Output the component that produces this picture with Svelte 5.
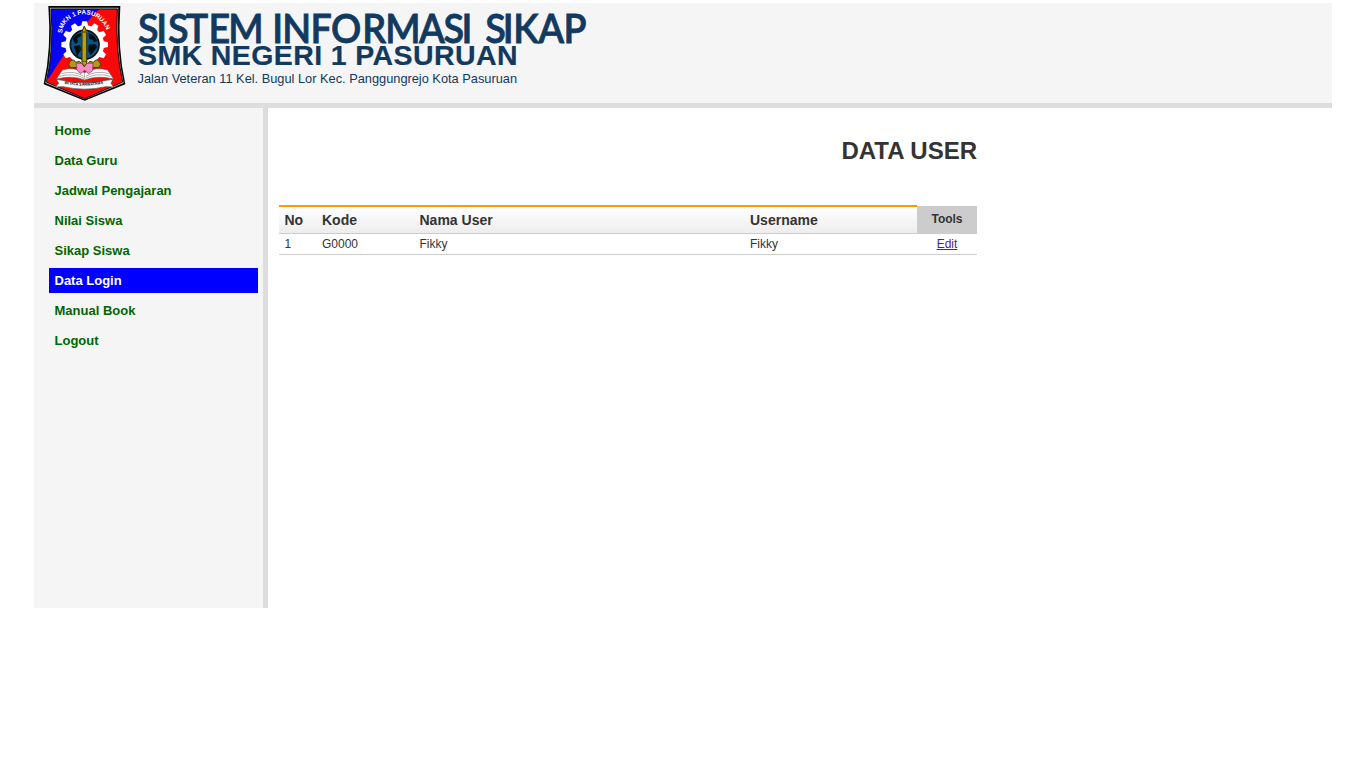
<script>
  const menu = ['Home', 'Data Guru', 'Jadwal Pengajaran', 'Nilai Siswa', 'Sikap Siswa', 'Data Login', 'Manual Book', 'Logout'];
  const active = 'Data Login';
  const users = [{ kode: 'G0000', nama: 'Fikky', username: 'Fikky' }];
  const teeth = Array.from({ length: 12 }, (_, i) => i * 30);

  // Display lettering: condensed glyphs on wide, hand-set advances.
  const squeeze = 0.92;
  const advances = [138, 156.3, 168, 185.7, 208.5, 228.3, 262, 272.3, 282.3, 310.5, 331, 362.2, 385.2, 419, 443.6, 461.5, 474, 485.3, 502.8, 513.2, 538.3, 563.5]
    .map((x) => (x / squeeze).toFixed(2))
    .join(' ');
</script>

<div class="page">
  <header>
    <svg class="logo" viewBox="0 9 300 300" width="100" height="100">
      <defs>
        <clipPath id="shield"><path d="M51 27H250Q243 145 266 246L152 296L37 246Q61 145 51 27Z" /></clipPath>
        <path id="arc" d="M84 100C88 34 200 12 222 106" />
        <path id="motto" d="M91 251Q150 264 212 250" />
      </defs>
      <path d="M43 18H259Q250 147 274 253L152 302L29 253Q53 147 43 18Z" fill="#050505" />
      <path d="M48 23H253Q246 147 269 249L152 298L34 249Q58 147 48 23Z" fill="#bbb" />
      <g clip-path="url(#shield)">
        <path d="M28 18H280V310H28Z" fill="#f80808" />
        <path d="M28 18H208Q160 55 120 125Q75 181 45 235H28Z" fill="#0505f5" />
      </g>
      <path d="M51 27H250Q243 145 266 246L152 296L37 246Q61 145 51 27Z" fill="none" stroke="#111" stroke-width="3" />
      <g fill="#fff" transform="translate(152 134)">
        {#each teeth as a}
          <path d="M-11 -54L-7 -70H7L11 -54Z" transform="rotate({a})" />
        {/each}
        <circle r="58" />
      </g>
      <circle cx="152" cy="134" r="43" fill="#07558b" stroke="#111" stroke-width="5" />
      <path d="M116 116L126 104L143 98L140 109L130 115L132 128L123 132ZM119 139L137 135L143 147L134 160L130 171ZM163 98L180 107L190 122L180 127L175 119L166 117ZM164 134L183 132L190 141L178 156L170 166L163 153Z" fill="#030e13" />
      <path d="M67 237L85 210Q119 199 152 218Q185 199 221 210L239 237Q190 225 152 240Q115 225 67 237Z" fill="#fff" stroke="#555" stroke-width="2" />
      <path d="M151 218V238M82 221Q120 210 149 229M224 221Q187 210 155 229M76 229Q118 217 150 235M230 229Q188 217 154 235" fill="none" stroke="#888" stroke-width="2" />
      <path d="M107 185Q119 174 125 187L137 184L142 191L132 202L110 203Q100 193 107 185ZM197 185Q185 174 179 187L167 184L162 191L172 202L194 203Q204 193 197 185Z" fill="#b39a16" stroke="#423c0b" stroke-width="3" />
      <path d="M127 190H177L176 212L164 221L152 211L140 221L128 210Z" fill="#f58ac4" stroke="#7a3552" stroke-width="2" />
      <path d="M144 95L151 78L158 95V190L151 200L144 190Z" fill="#b5a010" stroke="#322e07" stroke-width="3" />
      <path d="M141 96H162M143 184H160" stroke="#625b08" stroke-width="4" />
      <path d="M67 238L85 241Q152 256 217 241L237 238L231 250L239 261L216 260Q151 275 87 260L65 261L74 250Z" fill="#fff" stroke="#444" stroke-width="2" />
      <text class="ring"><textPath href="#arc" textLength="184" lengthAdjust="spacingAndGlyphs">SMKN 1 PASURUAN</textPath></text>
      <text class="motto"><textPath href="#motto" textLength="118" lengthAdjust="spacingAndGlyphs">WIYATA SARWATAMA</textPath></text>
    </svg>
    <svg class="titles" viewBox="134 3 470 100" width="470" height="100">
      <text class="system" x={advances} y="43" transform="scale({squeeze} 1)">SISTEM INFORMASI SIKAP</text>
      <text class="school" x="138" y="65" textLength="379.5" lengthAdjust="spacing">SMK NEGERI 1 PASURUAN</text>
      <text class="address" x="137.5" y="83" textLength="379.5" lengthAdjust="spacingAndGlyphs">Jalan Veteran 11 Kel. Bugul Lor Kec. Panggungrejo Kota Pasuruan</text>
    </svg>
  </header>
  <div class="body">
    <nav>
      {#each menu as item}
        <a href="#menu" class:active={item === active}>{item}</a>
      {/each}
    </nav>
    <main>
      <h1>DATA USER</h1>
      <table>
        <colgroup><col class="c-no" /><col class="c-kode" /><col class="c-nama" /><col class="c-user" /><col class="c-tools" /></colgroup>
        <thead>
          <tr><th>No</th><th>Kode</th><th>Nama User</th><th>Username</th><th class="tools">Tools</th></tr>
        </thead>
        <tbody>
          {#each users as user, i}
            <tr><td>{i + 1}</td><td>{user.kode}</td><td>{user.nama}</td><td>{user.username}</td><td class="edit"><a href="#edit">Edit</a></td></tr>
          {/each}
        </tbody>
      </table>
    </main>
  </div>
</div>

<style>
  :global(body) { margin: 0; background: #fff; }
  .page { width: 1298px; margin: 0 auto; padding-top: 3px; font-family: "Liberation Sans", Arial, sans-serif; color: #333; }
  header { display: flex; height: 100px; background: #f5f5f5; border-bottom: 5px solid #ddd; }
  svg { display: block; flex: none; overflow: visible; }
  .ring { font: bold 19px "Liberation Sans", Arial, sans-serif; fill: #fff; }
  .motto { font: bold 13px "Liberation Sans", Arial, sans-serif; fill: #111; }
  .titles text { fill: #12395e; }
  .titles .system { font: 600 41px Lato, sans-serif; stroke: #12395e; stroke-width: 0.8px; }
  .titles .school { font: bold 28.5px "Liberation Sans", Arial, sans-serif; stroke: #12395e; stroke-width: 0.2px; }
  .titles .address { font: 13px "Liberation Sans", Arial, sans-serif; }
  .body { display: flex; height: 500px; }
  nav { box-sizing: border-box; width: 234px; padding: 10px 5px 0 15px; background: #f5f5f5; border-right: 5px solid #ddd; display: flex; flex-direction: column; gap: 5px; }
  nav a { height: 25px; line-height: 25px; padding-left: 5.5px; font-size: 13px; font-weight: bold; color: #060; text-decoration: none; }
  nav a.active { background: #00f; color: #fff; }
  main { width: 698px; padding: 28px 0 0 11px; }
  h1 { margin: 0 0 41px; height: 28px; line-height: 29px; font-size: 24px; text-align: right; }
  table { width: 698px; table-layout: fixed; border-collapse: separate; border-spacing: 0; font-size: 12px; }
  .c-no { width: 37.5px; }
  .c-kode { width: 97.5px; }
  .c-nama { width: 330.5px; }
  .c-user { width: 172.5px; }
  .c-tools { width: 60px; }
  th { box-sizing: border-box; height: 29px; padding: 0 0 0 5.5px; border-top: 2px solid #f90; border-bottom: 1px solid #ccc; background: linear-gradient(#fff, #ededed); font-size: 14px; line-height: 26px; text-align: left; }
  th.tools { padding: 1px 0 0; background: linear-gradient(#ccc, #ccc) 0 1px no-repeat; border: 0; font-size: 12px; line-height: 26px; text-align: center; vertical-align: top; }
  td { box-sizing: border-box; height: 21px; padding: 0 0 0 5.5px; border-bottom: 1px solid #ccc; line-height: 20px; }
  td.edit { padding: 0; text-align: center; }
  td a { color: #551a8b; }
</style>
